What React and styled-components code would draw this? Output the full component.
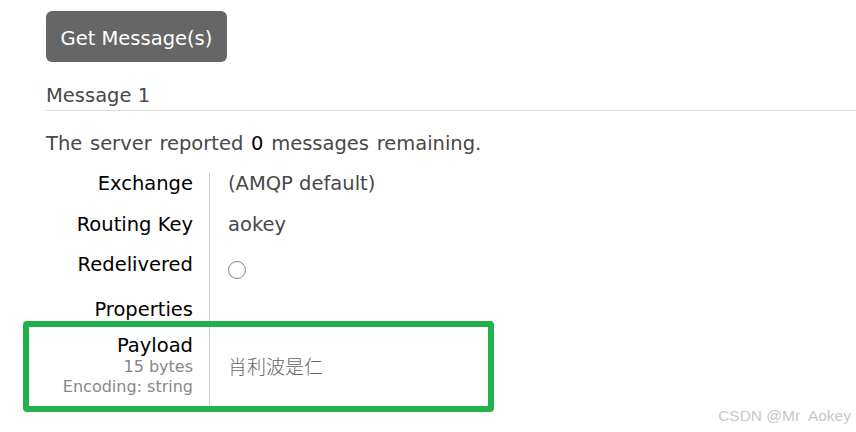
import React from "react";
import styled, { createGlobalStyle } from "styled-components";

const Global = createGlobalStyle`
  html, body { margin: 0; padding: 0; background: #fff; }
  body { font-family: "DejaVu Sans", Verdana, sans-serif; font-size: 19.5px; color: #484848; }
`;

const Page = styled.div`
  position: relative;
  width: 856px;
  height: 432px;
  overflow: hidden;
  padding: 11px 0 0 46px;
  box-sizing: border-box;
`;

const Button = styled.button`
  display: block;
  height: 51px;
  width: 181px;
  padding: 3px 0 0;
  border: none;
  border-radius: 6px;
  background: #666;
  color: #fff;
  font-family: inherit;
  font-size: 19.5px;
  text-align: center;
`;

const SectionTitle = styled.div`
  margin-top: 23px;
  padding-bottom: 3px;
  border-bottom: 1px solid #ddd;
  color: #484848;
  line-height: 22px;
`;

const Info = styled.p`
  margin: 22px 0 0;
  line-height: 22px;
  color: #484848;
  word-spacing: 1.5px;
`;

const Strong = styled.span`
  color: #000;
`;

const Table = styled.div`
  margin-top: 18px;
  display: grid;
  grid-template-columns: 164px 1fr;
  width: 440px;
`;

const Label = styled.div`
  text-align: right;
  padding-right: 16px;
  border-right: 1px solid #ccc;
  color: #000;
  line-height: 22px;
  height: ${(p) => p.$h}px;
  padding-top: ${(p) => p.$top || 0}px;
  box-sizing: border-box;
`;

const Value = styled.div`
  padding-left: 18px;
  line-height: 22px;
  color: #484848;
  height: ${(p) => p.$h}px;
  padding-top: ${(p) => p.$top || 0}px;
  box-sizing: border-box;
`;

const Sub = styled.div`
  font-size: 16px;
  line-height: 20px;
  color: #888;
`;

const Radio = styled.span`
  display: inline-block;
  width: 18px;
  height: 18px;
  border: 1px solid #858585;
  border-radius: 50%;
  margin-top: 7px;
  box-sizing: border-box;
`;

const Cjk = styled.span`
  font-family: "Noto Sans CJK SC", sans-serif;
  font-weight: 300;
  color: #666;
  font-size: 19px;
`;

const Highlight = styled.div`
  position: absolute;
  left: 23px;
  top: 321px;
  width: 471px;
  height: 91px;
  border: 6px solid #22b04b;
  border-radius: 4px;
  box-sizing: border-box;
  pointer-events: none;
`;

const Watermark = styled.div`
  position: absolute;
  right: 5px;
  top: 407px;
  font-family: "Liberation Sans", Arial, sans-serif;
  font-size: 15.5px;
  color: #c8c8c8;
  white-space: pre;
`;

const rows = [
  { label: "Exchange", value: "(AMQP default)", h: 41 },
  { label: "Routing Key", value: "aokey", h: 40 },
  { label: "Redelivered", value: "radio", h: 45 },
  { label: "Properties", value: "", h: 36 },
];

export default function App() {
  return (
    <>
      <Global />
      <Page>
        <Button>Get Message(s)</Button>
        <SectionTitle>Message 1</SectionTitle>
        <Info>
          The server reported <Strong>0</Strong> messages remaining.
        </Info>
        <Table>
          {rows.map((r) => (
            <React.Fragment key={r.label}>
              <Label $h={r.h}>{r.label}</Label>
              <Value $h={r.h}>{r.value === "radio" ? <Radio /> : r.value}</Value>
            </React.Fragment>
          ))}
          <Label $h={76}>
            Payload
            <Sub>15 bytes</Sub>
            <Sub>Encoding: string</Sub>
          </Label>
          <Value $h={76} $top={20}>
            <Cjk>肖利波是仁</Cjk>
          </Value>
        </Table>
        <Highlight />
        <Watermark>CSDN @Mr  Aokey</Watermark>
      </Page>
    </>
  );
}
